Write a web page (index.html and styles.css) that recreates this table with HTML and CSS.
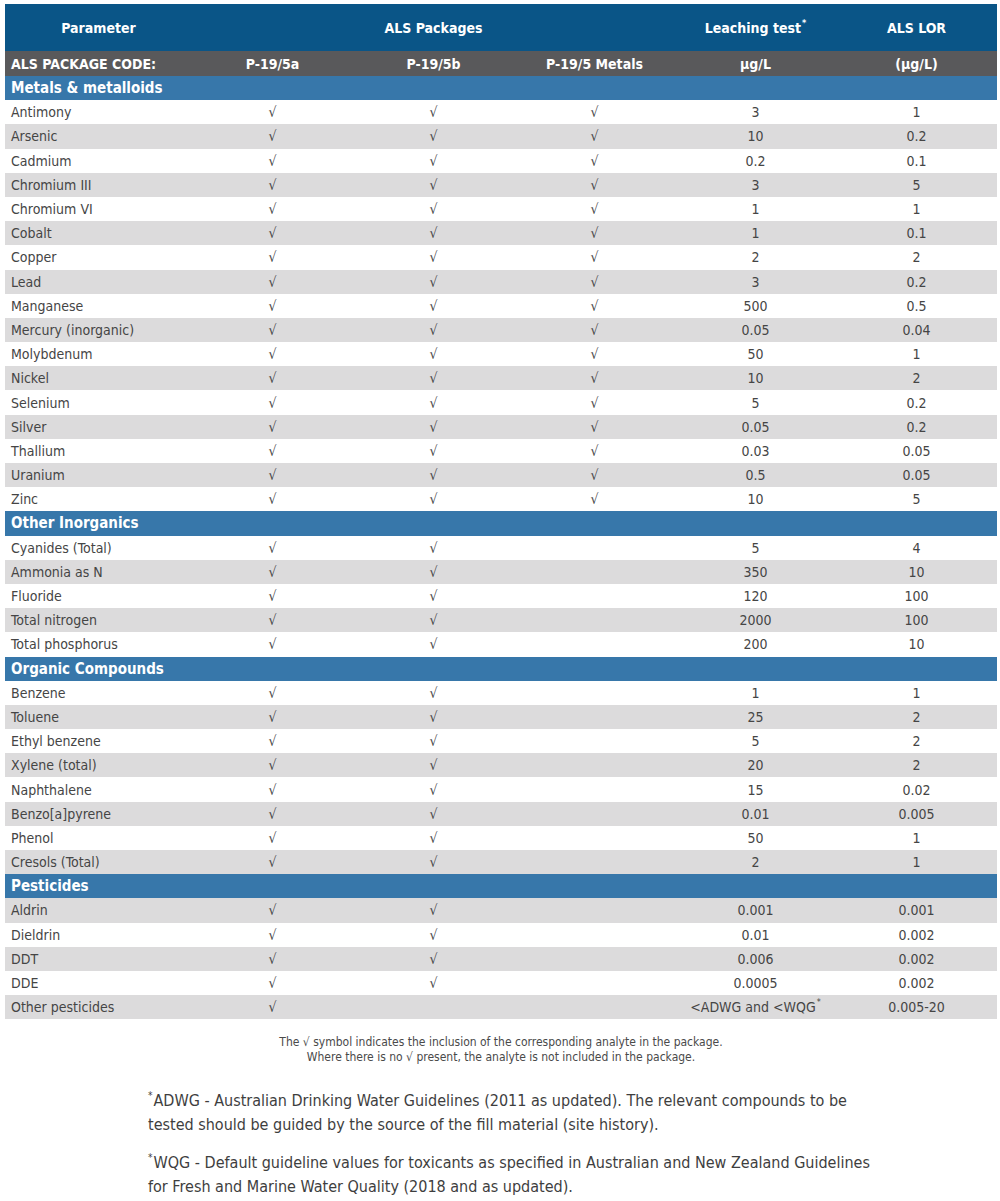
FILE: index.html
```html
<!DOCTYPE html>
<html>
<head>
<meta charset="utf-8">
<link rel="stylesheet" href="styles.css">
</head>
<body>
<table class="pkg">
  <colgroup>
    <col class="c-param"><col class="c-num"><col class="c-num"><col class="c-num"><col class="c-num"><col class="c-num">
  </colgroup>
  <thead>
    <tr class="h-top">
      <th>Parameter</th>
      <th colspan="3">ALS Packages</th>
      <th>Leaching test<span class="star">*</span></th>
      <th>ALS LOR</th>
    </tr>
    <tr class="h-code">
      <th class="left">ALS PACKAGE CODE:</th>
      <th>P-19/5a</th>
      <th>P-19/5b</th>
      <th>P-19/5 Metals</th>
      <th>µg/L</th>
      <th>(µg/L)</th>
    </tr>
  </thead>
  <tbody>
    <tr class="sec"><td colspan="6">Metals &amp; metalloids</td></tr>
    <tr><td>Antimony</td><td>√</td><td>√</td><td>√</td><td>3</td><td>1</td></tr>
    <tr class="alt"><td>Arsenic</td><td>√</td><td>√</td><td>√</td><td>10</td><td>0.2</td></tr>
    <tr><td>Cadmium</td><td>√</td><td>√</td><td>√</td><td>0.2</td><td>0.1</td></tr>
    <tr class="alt"><td>Chromium III</td><td>√</td><td>√</td><td>√</td><td>3</td><td>5</td></tr>
    <tr><td>Chromium VI</td><td>√</td><td>√</td><td>√</td><td>1</td><td>1</td></tr>
    <tr class="alt"><td>Cobalt</td><td>√</td><td>√</td><td>√</td><td>1</td><td>0.1</td></tr>
    <tr><td>Copper</td><td>√</td><td>√</td><td>√</td><td>2</td><td>2</td></tr>
    <tr class="alt"><td>Lead</td><td>√</td><td>√</td><td>√</td><td>3</td><td>0.2</td></tr>
    <tr><td>Manganese</td><td>√</td><td>√</td><td>√</td><td>500</td><td>0.5</td></tr>
    <tr class="alt"><td>Mercury (inorganic)</td><td>√</td><td>√</td><td>√</td><td>0.05</td><td>0.04</td></tr>
    <tr><td>Molybdenum</td><td>√</td><td>√</td><td>√</td><td>50</td><td>1</td></tr>
    <tr class="alt"><td>Nickel</td><td>√</td><td>√</td><td>√</td><td>10</td><td>2</td></tr>
    <tr><td>Selenium</td><td>√</td><td>√</td><td>√</td><td>5</td><td>0.2</td></tr>
    <tr class="alt"><td>Silver</td><td>√</td><td>√</td><td>√</td><td>0.05</td><td>0.2</td></tr>
    <tr><td>Thallium</td><td>√</td><td>√</td><td>√</td><td>0.03</td><td>0.05</td></tr>
    <tr class="alt"><td>Uranium</td><td>√</td><td>√</td><td>√</td><td>0.5</td><td>0.05</td></tr>
    <tr><td>Zinc</td><td>√</td><td>√</td><td>√</td><td>10</td><td>5</td></tr>
    <tr class="sec"><td colspan="6">Other Inorganics</td></tr>
    <tr><td>Cyanides (Total)</td><td>√</td><td>√</td><td></td><td>5</td><td>4</td></tr>
    <tr class="alt"><td>Ammonia as N</td><td>√</td><td>√</td><td></td><td>350</td><td>10</td></tr>
    <tr><td>Fluoride</td><td>√</td><td>√</td><td></td><td>120</td><td>100</td></tr>
    <tr class="alt"><td>Total nitrogen</td><td>√</td><td>√</td><td></td><td>2000</td><td>100</td></tr>
    <tr><td>Total phosphorus</td><td>√</td><td>√</td><td></td><td>200</td><td>10</td></tr>
    <tr class="sec"><td colspan="6">Organic Compounds</td></tr>
    <tr><td>Benzene</td><td>√</td><td>√</td><td></td><td>1</td><td>1</td></tr>
    <tr class="alt"><td>Toluene</td><td>√</td><td>√</td><td></td><td>25</td><td>2</td></tr>
    <tr><td>Ethyl benzene</td><td>√</td><td>√</td><td></td><td>5</td><td>2</td></tr>
    <tr class="alt"><td>Xylene (total)</td><td>√</td><td>√</td><td></td><td>20</td><td>2</td></tr>
    <tr><td>Naphthalene</td><td>√</td><td>√</td><td></td><td>15</td><td>0.02</td></tr>
    <tr class="alt"><td>Benzo[a]pyrene</td><td>√</td><td>√</td><td></td><td>0.01</td><td>0.005</td></tr>
    <tr><td>Phenol</td><td>√</td><td>√</td><td></td><td>50</td><td>1</td></tr>
    <tr class="alt"><td>Cresols (Total)</td><td>√</td><td>√</td><td></td><td>2</td><td>1</td></tr>
    <tr class="sec"><td colspan="6">Pesticides</td></tr>
    <tr class="alt"><td>Aldrin</td><td>√</td><td>√</td><td></td><td>0.001</td><td>0.001</td></tr>
    <tr><td>Dieldrin</td><td>√</td><td>√</td><td></td><td>0.01</td><td>0.002</td></tr>
    <tr class="alt"><td>DDT</td><td>√</td><td>√</td><td></td><td>0.006</td><td>0.002</td></tr>
    <tr><td>DDE</td><td>√</td><td>√</td><td></td><td>0.0005</td><td>0.002</td></tr>
    <tr class="alt"><td>Other pesticides</td><td>√</td><td></td><td></td><td>&lt;ADWG and &lt;WQG<span class="star">*</span></td><td>0.005-20</td></tr>
  </tbody>
</table>

<p class="caption">The √ symbol indicates the inclusion of the corresponding analyte in the package.<br>Where there is no √ present, the analyte is not included in the package.</p>

<div class="notes">
  <p><span class="nstar">*</span>ADWG - Australian Drinking Water Guidelines (2011 as updated). The relevant compounds to be tested should be guided by the source of the fill material (site history).</p>
  <p><span class="nstar">*</span>WQG - Default guideline values for toxicants as specified in Australian and New Zealand Guidelines for Fresh and Marine Water Quality (2018 and as updated).</p>
</div>
</body>
</html>
```
FILE: styles.css
```css
html, body {
  margin: 0;
  padding: 0;
  background: #ffffff;
}
body {
  padding: 4px 3px 0 5px;
  font-family: "Liberation Sans Narrow", "DejaVu Sans Condensed", "Noto Sans", sans-serif;
  color: #454545;
}
.pkg {
  width: 992px;
  border-collapse: collapse;
  table-layout: fixed;
  font-size: 14px;
}
.c-param { width: 187px; }
.c-num { width: 161px; }
.pkg th {
  font-weight: bold;
  color: #ffffff;
  text-align: center;
  padding: 0 4px;
}
.star {
  display: inline-block;
  font-size: 9px;
  line-height: 9px;
  vertical-align: top;
  margin-top: -1px;
  margin-left: 1px;
}
.h-top th {
  background: #0a5587;
  height: 47px;
  font-size: 14px;
}
.h-code th {
  background: #59595b;
  height: 25px;
  font-size: 14px;
}
.h-code th.left {
  text-align: left;
  padding-left: 6px;
}
.pkg td {
  height: 24.2px;
  padding: 0 4px;
  text-align: center;
  vertical-align: middle;
  box-sizing: border-box;
}
.pkg td:first-child {
  text-align: left;
  padding-left: 6px;
}
.pkg tr.alt td {
  background: #dcdbdc;
}
.pkg tr.sec td {
  background: #3777aa;
  color: #ffffff;
  font-weight: bold;
  font-size: 15px;
  text-align: left;
  padding-left: 6px;
}
.caption {
  margin: 16px 0 0;
  text-align: center;
  font-size: 12px;
  line-height: 15px;
  color: #4a4a4a;
}
.notes {
  margin: 24px 0 0 143px;
  width: 730px;
  font-size: 16px;
  line-height: 24px;
  color: #3e3e3e;
}
.notes p {
  margin: 0 0 14px;
}
.nstar {
  display: inline-block;
  font-size: 10px;
  line-height: 10px;
  vertical-align: top;
  margin-top: 2px;
  margin-right: 1px;
}
```
